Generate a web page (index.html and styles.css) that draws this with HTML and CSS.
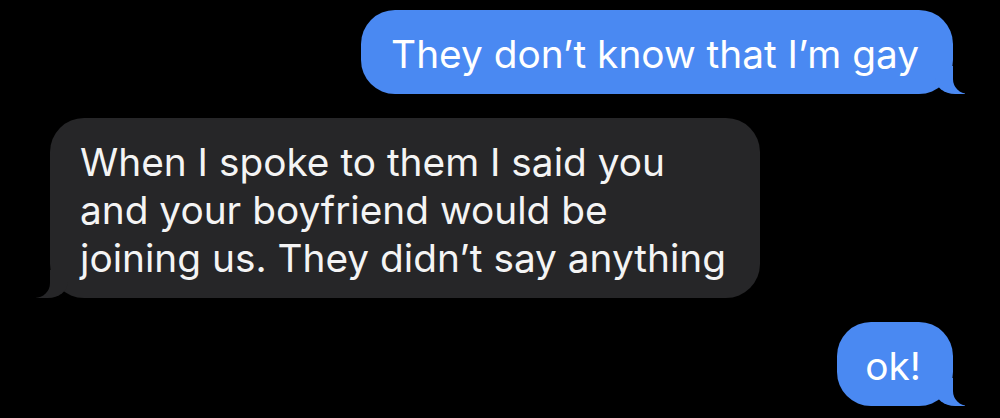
FILE: index.html
```html
<!DOCTYPE html>
<html lang="en">
<head>
    <meta charset="UTF-8">
    <meta name="viewport" content="width=device-width, initial-scale=1.0">
    <title>Messages</title>
    <link rel="stylesheet" href="styles.css">
</head>
<body>

    <div class="thread">
        <!-- outgoing -->
        <div class="bubble sent">They don’t know that I’m gay</div>

        <!-- incoming -->
        <div class="bubble received">When I spoke to them I said you<br>and your boyfriend would be<br>joining us. They didn’t say anything</div>

        <div class="bubble sent short">ok!</div>
    </div>

</body>
</html>
```

FILE: styles.css
```css
body {
    margin: 0;
    background-color: #000;
    font-family: Inter, "Noto Sans", sans-serif;
}

.thread {
    display: flex;
    flex-direction: column;
    gap: 24px;
    padding: 10px 47px 0 50px;
}

.bubble {
    position: relative;
    padding: 20px 34px 16px 30px;
    font-size: 38.8px;
    line-height: 48px;
    border-radius: 34px;
    color: #fff;
}

.sent {
    align-self: flex-end;
    background-color: #4a89f2;
}

.short {
    padding-left: 28px;
    padding-right: 32px;
}

.received {
    align-self: flex-start;
    background-color: #262628;
    color: #f4f4f4;
}

/* tails */
.bubble::before,
.bubble::after {
    content: "";
    position: absolute;
    bottom: 0;
    height: 28px;
}

.sent::before {
    right: -12px;
    width: 30px;
    background-color: #4a89f2;
    border-bottom-left-radius: 20px 16px;
}

.sent::after {
    right: -30px;
    width: 30px;
    background-color: #000;
    border-bottom-left-radius: 15px;
}

.received::before {
    left: -14px;
    width: 32px;
    background-color: #262628;
    border-bottom-right-radius: 20px 16px;
}

.received::after {
    left: -30px;
    width: 30px;
    background-color: #000;
    border-bottom-right-radius: 15px;
}
```
